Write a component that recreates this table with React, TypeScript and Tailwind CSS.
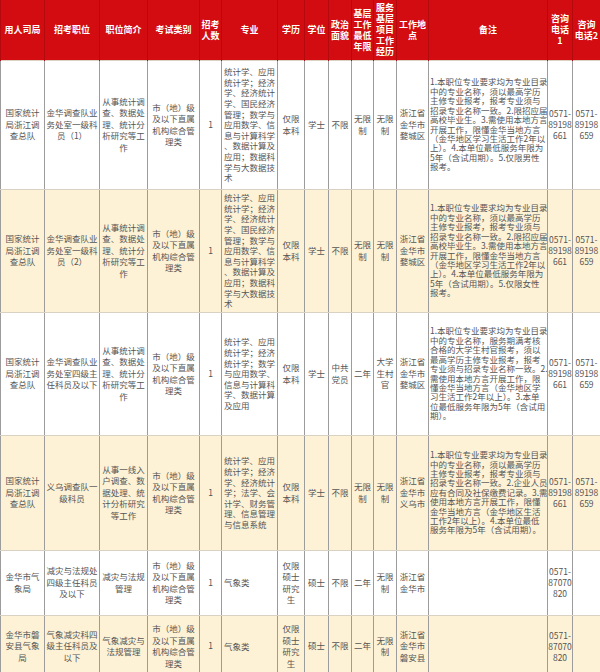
import React from "react";

const widths = [44, 55, 48, 52, 22, 56, 27, 24, 23, 22, 23, 32, 119, 25, 28];

const header: string[][] = [
  ["用人司局"],
  ["招考职位"],
  ["职位简介"],
  ["考试类别"],
  ["招考", "人数"],
  ["专业"],
  ["学历"],
  ["学位"],
  ["政治", "面貌"],
  ["基层", "工作", "最低", "年限"],
  ["服务", "基层", "项目", "工作", "经历"],
  ["工作地", "点"],
  ["备注"],
  ["咨询", "电话", "1"],
  ["咨询", "电话2"],
];

const phone1 = ["0571-", "89198", "661"];
const phone2 = ["0571-", "89198", "659"];
const phone3 = ["0571-", "87070", "820"];
const org = ["国家统计", "局浙江调", "查总队"];
const intro = ["从事统计调", "查、数据处", "理、统计分", "析研究等工", "作"];
const exam = ["市（地）级", "及以下直属", "机构综合管", "理类"];
const major1 = [
  "统计学、应用",
  "统计学；经济",
  "学、经济统计",
  "学、国民经济",
  "管理；数学与",
  "应用数学、信",
  "息与计算科学",
  "、数据计算及",
  "应用；数据科",
  "学与大数据技",
  "术",
];
const note1 = (sex: string) => [
  "1.本职位专业要求均为专业目录",
  "中的专业名称，须以最高学历",
  "主修专业报考，报考专业须与",
  "招录专业名称一致。2.限招应届",
  "高校毕业生。3.需使用本地方言",
  "开展工作，限懂金华当地方言",
  "（金华地区学习生活工作2年以",
  "上）。4.本单位最低服务年限为",
  `5年（含试用期）。5.仅限${sex}性`,
  "报考。",
];

type Row = { h: number; bg: string; cells: string[][] };

const rows: Row[] = [
  {
    h: 129,
    bg: "bg-white",
    cells: [
      org,
      ["金华调查队业", "务处室一级科", "员（1）"],
      intro,
      exam,
      ["1"],
      major1,
      ["仅限", "本科"],
      ["学士"],
      ["不限"],
      ["无限", "制"],
      ["无限", "制"],
      ["浙江省", "金华市", "婺城区"],
      note1("男"),
      phone1,
      phone2,
    ],
  },
  {
    h: 123,
    bg: "bg-[#fdf2d5]",
    cells: [
      org,
      ["金华调查队业", "务处室一级科", "员（2）"],
      intro,
      exam,
      ["1"],
      major1,
      ["仅限", "本科"],
      ["学士"],
      ["不限"],
      ["无限", "制"],
      ["无限", "制"],
      ["浙江省", "金华市", "婺城区"],
      note1("女"),
      phone1,
      phone2,
    ],
  },
  {
    h: 123,
    bg: "bg-white",
    cells: [
      org,
      ["金华调查队业", "务处室四级主", "任科员及以下"],
      intro,
      exam,
      ["1"],
      [
        "统计学、应用",
        "统计学；经济",
        "统计学；数学",
        "与应用数学、",
        "信息与计算科",
        "学、数据计算",
        "及应用",
      ],
      ["仅限", "本科"],
      ["学士"],
      ["中共", "党员"],
      ["二年"],
      ["大学", "生村", "官"],
      ["浙江省", "金华市", "婺城区"],
      [
        "1.本职位专业要求均为专业目录",
        "中的专业名称，服务期满考核",
        "合格的大学生村官报考，须以",
        "最高学历主修专业报考，报考",
        "专业须与招录专业名称一致。2.",
        "需使用本地方言开展工作，限",
        "懂金华当地方言（金华地区学",
        "习生活工作2年以上）。3.本单",
        "位最低服务年限为5年（含试用",
        "期）。",
      ],
      phone1,
      phone2,
    ],
  },
  {
    h: 115,
    bg: "bg-[#fdf2d5]",
    cells: [
      org,
      ["义乌调查队一", "级科员"],
      ["从事一线入", "户调查、数", "据处理、统", "计分析研究", "等工作"],
      exam,
      ["1"],
      [
        "统计学、应用",
        "统计学；经济",
        "学、经济统计",
        "学；法学、会",
        "计学、财务管",
        "理、信息管理",
        "与信息系统",
      ],
      ["仅限", "本科"],
      ["学士"],
      ["不限"],
      ["无限", "制"],
      ["无限", "制"],
      ["浙江省", "金华市", "义乌市"],
      [
        "1.本职位专业要求均为专业目录",
        "中的专业名称，须以最高学历",
        "主修专业报考，报考专业须与",
        "招录专业名称一致。2.企业人员",
        "应有合同及社保缴费记录。3.需",
        "使用本地方言开展工作，限懂",
        "金华当地方言（金华地区生活",
        "工作2年以上）。4.本单位最低",
        "服务年限为5年（含试用期）。",
      ],
      phone1,
      phone2,
    ],
  },
  {
    h: 65,
    bg: "bg-white",
    cells: [
      ["金华市气", "象局"],
      ["减灾与法规处", "四级主任科员", "及以下"],
      ["减灾与法规", "管理"],
      exam,
      ["1"],
      ["气象类"],
      ["仅限", "硕士", "研究", "生"],
      ["硕士"],
      ["不限"],
      ["二年"],
      ["无限", "制"],
      ["浙江省", "金华市"],
      [],
      phone3,
      [],
    ],
  },
  {
    h: 62,
    bg: "bg-[#fdf2d5]",
    cells: [
      ["金华市磐", "安县气象", "局"],
      ["气象减灾科四", "级主任科员及", "以下"],
      ["气象减灾与", "法规管理"],
      exam,
      ["1"],
      ["气象类"],
      ["仅限", "硕士", "研究", "生"],
      ["硕士"],
      ["不限"],
      ["二年"],
      ["无限", "制"],
      ["浙江省", "金华市", "磐安县"],
      [],
      phone3,
      [],
    ],
  },
];

function Lines({ lines }: { lines: string[] }) {
  return (
    <>
      {lines.map((l, i) => (
        <div key={i} className="whitespace-nowrap">
          {l}
        </div>
      ))}
    </>
  );
}

function cellClass(ci: number): string {
  if (ci === 5) return "text-left pl-[2px] leading-[10.6px]";
  if (ci === 12) return "text-left pl-[1px] leading-[9.4px]";
  if (ci === 13 || ci === 14) return "text-center leading-[11px]";
  return "text-center leading-[11.5px]";
}

export default function App() {
  return (
    <div
      className="w-[600px] h-[672px] overflow-hidden bg-white"
      style={{ fontFamily: '"Noto Sans CJK SC", "Noto Sans", sans-serif' }}
    >
      <table className="table-fixed border-collapse w-[600px]">
        <colgroup>
          {widths.map((w, i) => (
            <col key={i} style={{ width: w }} />
          ))}
        </colgroup>
        <thead>
          <tr className="h-[60px] bg-[#d20c10]">
            {header.map((h, i) => (
              <th
                key={i}
                className="border-x border-[#b50a0d] p-0 text-center align-middle text-[9px] leading-[11px] font-bold text-white overflow-hidden"
              >
                <Lines lines={h} />
              </th>
            ))}
          </tr>
        </thead>
        <tbody>
          {rows.map((r, ri) => (
            <tr key={ri} className={r.bg} style={{ height: r.h }}>
              {r.cells.map((c, ci) => (
                <td
                  key={ci}
                  className={`border-x border-x-[#9c9c9c] border-y border-y-[#d9d2c4] p-0 align-middle text-[8.5px] text-[#555555] overflow-hidden ${cellClass(ci)}`}
                >
                  <Lines lines={c} />
                </td>
              ))}
            </tr>
          ))}
        </tbody>
      </table>
    </div>
  );
}
